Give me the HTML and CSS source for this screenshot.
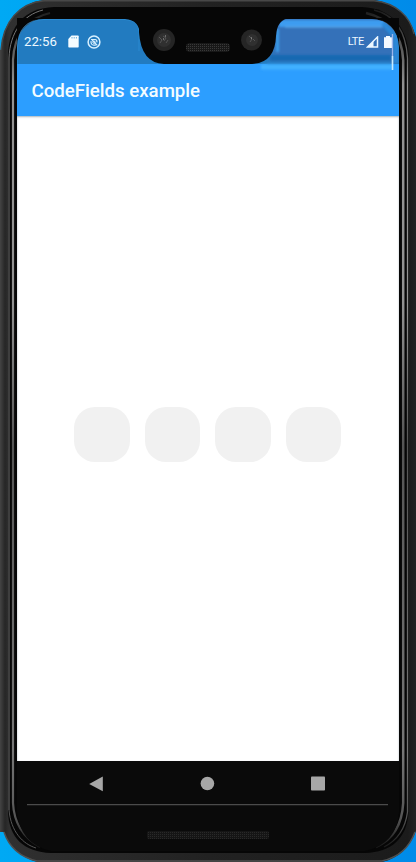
FILE: index.html
```html
<!DOCTYPE html>
<html lang="en">
<head>
<meta charset="utf-8">
<title>CodeFields example</title>
<link rel="stylesheet" href="styles.css">
</head>
<body>
<div class="phone">
  <svg class="frame" viewBox="0 0 416 862" aria-hidden="true">
    <defs>
      <linearGradient id="edge" x1="0" x2="1" y1="0" y2="0">
        <stop offset="0" stop-color="#444"/><stop offset=".012" stop-color="#262626"/><stop offset=".022" stop-color="#303030"/><stop offset=".5" stop-color="#222"/><stop offset=".98" stop-color="#1b1b1b"/><stop offset="1" stop-color="#242424"/>
      </linearGradient>
      <linearGradient id="rim" gradientUnits="userSpaceOnUse" x1="0" x2="0" y1="8" y2="852">
        <stop offset="0" stop-color="#191919"/><stop offset=".035" stop-color="#4a4a4a"/><stop offset=".09" stop-color="#929292"/><stop offset=".35" stop-color="#929292"/><stop offset=".52" stop-color="#555"/><stop offset=".88" stop-color="#777"/><stop offset=".96" stop-color="#555"/><stop offset="1" stop-color="#111"/>
      </linearGradient>
      <pattern id="mesh" width="2" height="2" patternUnits="userSpaceOnUse"><rect width="2" height="2" fill="#181818"/><rect width="1" height="1" fill="#393939"/></pattern>
      <pattern id="mesh-low" width="2" height="2" patternUnits="userSpaceOnUse"><rect width="2" height="2" fill="#151515"/><rect width="1" height="1" fill="#292929"/></pattern>
    </defs>
    <path d="M0 50H1C3 22 19 3 44 0H374C396 3 411 18 416 37V831C410 846 400 858 382 862H37C20 857 9 847 4 832H0Z" fill="url(#edge)"/>
    <path d="M1 50C3 22 19 3 44 .7H374C396 3 410 16 414 34" fill="none" stroke="#484848" stroke-width="1.4"/>
    <path d="M4 832C9 847 20 857 37 861H382C400 857 410 846 415 832" fill="none" stroke="#505050" stroke-width="1.5"/>
    <path d="M8 54C9 26 25 8 54 7H362C390 8 407 26 408.5 54V812C407 839 391 852 365 853H51C24 852 9 838 8 812Z" fill="#060606"/>
    <path d="M9 810V58C10 32 23 15 43 10" fill="none" stroke="#777"/>
    <path d="M9 810C11 832 23 844 36 848" fill="none" stroke="#555"/>
    <path d="M374 10C395 15 406 32 407.5 58V812C405 831 396 841 384 847" fill="none" stroke="url(#rim)" stroke-width="1.3"/>
    <path d="M40 847C24 838 14 825 13 803V60C14 35 27 18 50 13" fill="none" stroke="url(#rim)" stroke-width="2.2"/>
    <path d="M366 13C389 18 402 35 403.2 60V803C402 825 392 840 376 847" fill="none" stroke="url(#rim)" stroke-width="2.5"/>
    <path d="M17 761H399V812Q397 844 365 851H51Q20 844 17 812Z" fill="#0a0a0a"/>
    <path d="M27 801.5H389" fill="none" stroke="#202020"/>
    <path d="M27 804.5H388" stroke="#4b4b4b" stroke-width="1.4"/>
    <rect x="147" y="831" width="122" height="8" rx="2" fill="url(#mesh-low)"/>
  </svg>

  <main class="screen">
    <header class="status">
      <div class="status-left">
        <span class="clock">22:56</span>
        <svg class="card-icon" viewBox="0 0 11 13"><path d="M3.5 .5H10Q10.7 .5 10.7 1.2V11.7Q10.7 12.5 10 12.5H1Q.3 12.5 .3 11.7V4Z" fill="#f5fcff"/><path d="M4 2V3.5M6.2 2V3.5M8.4 2V3.5" stroke="#6caed8"/></svg>
        <svg class="ring-icon" viewBox="0 0 14 14" fill="none" stroke="#d8f0ff"><circle cx="7" cy="7" r="5.9" stroke-width="1.5"/><path d="M4 4.5H8Q10.3 4.8 9.8 7.3M4.1 6.2Q3.5 9.8 7 10.2H8.8M5 4.8L10.3 10.3" stroke-width="1.2"/><circle cx="7" cy="7.2" r="1.2"/></svg>
      </div>
      <div class="status-right">
        <span class="network">LTE</span>
        <svg class="signal-icon" viewBox="0 0 12 12"><path d="M11 1V11H1Z" fill="none" stroke="#edf7ff" stroke-width="1.5"/><path d="M1 11L7 5V11Z" fill="#edf7ff"/></svg>
        <svg class="battery-icon" viewBox="0 0 8 12"><path d="M2 0H6V1.2H8V12H0V1.2H2Z" fill="#f5faff"/></svg>
      </div>
    </header>
    <h1 class="app-bar">CodeFields example</h1>
    <section class="content">
      <div class="code-fields"><span class="field"></span><span class="field"></span><span class="field"></span><span class="field"></span></div>
    </section>
    <nav class="navigation">
      <svg viewBox="0 0 16 16"><path d="M14.8 .5V15.2L1.2 8Z" fill="#a7a7a7"/></svg>
      <svg viewBox="0 0 16 16"><circle cx="8.4" cy="7.5" r="6.8" fill="#a7a7a7"/></svg>
      <svg viewBox="0 0 16 16"><rect x="1" y=".5" width="14" height="14" rx=".8" fill="#a7a7a7"/></svg>
    </nav>
  </main>

  <svg class="reflection" viewBox="0 0 416 120" aria-hidden="true">
    <defs>
      <filter id="soft" filterUnits="userSpaceOnUse" x="250" y="15" width="155" height="60"><feGaussianBlur stdDeviation=".8"/></filter>
      <clipPath id="glass"><path d="M252 64Q275 63 276 36Q277 19 290 19H371Q397 20 399 47V75H252Z"/></clipPath>
    </defs>
    <path d="M17 18H44Q18 20 17 47Z" fill="#060606"/>
    <path d="M399 18H371Q397 20 399 47Z" fill="#060606"/>
    <path d="M17.5 64V47Q18 20 44 19.5H125Q139 20 139 32V51" fill="none" stroke="#3194dc" opacity=".6"/>
    <g clip-path="url(#glass)">
      <g filter="url(#soft)">
        <path d="M279 23.5H384" stroke="#3d9cf0" stroke-width="7"/>
        <path d="M383 23L396 37V63" fill="none" stroke="#2988d8" stroke-width="5"/>
        <path d="M277.5 29V52" stroke="#3b9ce9" stroke-width="3"/>
        <path d="M270 58H391" stroke="#1769b2" stroke-width="6"/>
        <path d="M261 67H392" stroke="#42b1ff" stroke-width="5"/>
        <path d="M267 63H391" stroke="#2382ce" stroke-width="2"/>
        <path d="M285 27H382" stroke="#64b0ef"/>
      </g>
      <path d="M392.5 34V70" stroke="#9cb5eb" stroke-width="1.3"/>
      <path d="M392.5 56V70" stroke="#c5ecff" stroke-width="1.5"/>
    </g>
    <path d="M139 18V32Q141 63 164 64H252Q275 63 276 36Q277 19 290 18Z" fill="#060606"/>
    <path d="M125 18H145V36H140Q140 20 125 19Z" fill="#060606"/>
    <g fill="#252525"><circle cx="164" cy="40" r="11"/><circle cx="251.5" cy="40" r="10.5"/></g>
    <g fill="#303030"><circle cx="164" cy="40" r="7"/><circle cx="252" cy="40" r="6"/></g>
    <path d="M159 37L162 40L160 43M163 36L166 38L164 41M166 43L168 40M249 36L252 39L250 42M253 39L255 41" fill="none" stroke="#555"/>
    <path d="M163 39h1M251 38h1M165 36h1" stroke="#aaa"/>
    <rect x="186" y="43" width="44" height="9" rx="4" fill="url(#mesh)"/>
  </svg>
</div>
</body>
</html>
```
FILE: styles.css
```css
* { box-sizing: border-box; }

body {
  margin: 0;
  background: linear-gradient(90deg, #00a9f4, #008be9);
  font-family: Roboto, sans-serif;
}

.phone {
  position: relative;
  width: 416px;
  height: 862px;
  padding: 19px 17px 58px;
  overflow: hidden;
}

.frame {
  position: absolute;
  inset: 0;
  width: 416px;
  height: 862px;
}

.reflection {
  position: absolute;
  top: 0;
  left: 0;
  width: 416px;
  height: 120px;
}

.screen {
  position: relative;
  display: flex;
  flex-direction: column;
  width: 382px;
  height: 785px;
}

.status {
  display: flex;
  flex: 0 0 45px;
  align-items: center;
  justify-content: space-between;
  padding: 0 7px;
  border-radius: 27px 27px 0 0;
  background: linear-gradient(90deg, #227bc0 0 65%, #3471b9 68% 98%, #227bc0);
  color: #edf8ff;
}

.status-left,
.status-right {
  display: flex;
  align-items: center;
}

.clock {
  width: 44px;
  font-size: 13.2px;
  line-height: 16px;
}

.card-icon { width: 11px; height: 13px; }
.ring-icon { width: 14px; height: 14px; margin-left: 8px; }
.network { font-size: 11px; letter-spacing: -.3px; }
.signal-icon { width: 13px; height: 12px; margin-left: 2px; }
.battery-icon { width: 8px; height: 12px; margin-left: 5px; }

.app-bar {
  flex: 0 0 52px;
  margin: 0;
  padding: 3px 14.5px 0;
  background: #2c9eff;
  color: #f4fcff;
  font-size: 18.65px;
  font-weight: 500;
  line-height: 49px;
}

.content {
  display: flex;
  flex: 1;
  align-items: center;
  justify-content: center;
  padding: 0 1px 9px 0;
  background: #fff;
  box-shadow: inset 0 1px 2px #aab5bd;
  clip-path: inset(0);
}

.code-fields {
  display: flex;
  gap: 15px;
}

.field {
  width: 55.5px;
  height: 55px;
  border-radius: 21px;
  background: #f1f1f1;
}

.navigation {
  display: flex;
  flex: 0 0 43px;
  align-items: center;
  justify-content: space-between;
  padding: 2px 73px 0 71px;
  background: #0a0a0a;
}

.navigation svg {
  width: 16px;
  height: 16px;
}
```
